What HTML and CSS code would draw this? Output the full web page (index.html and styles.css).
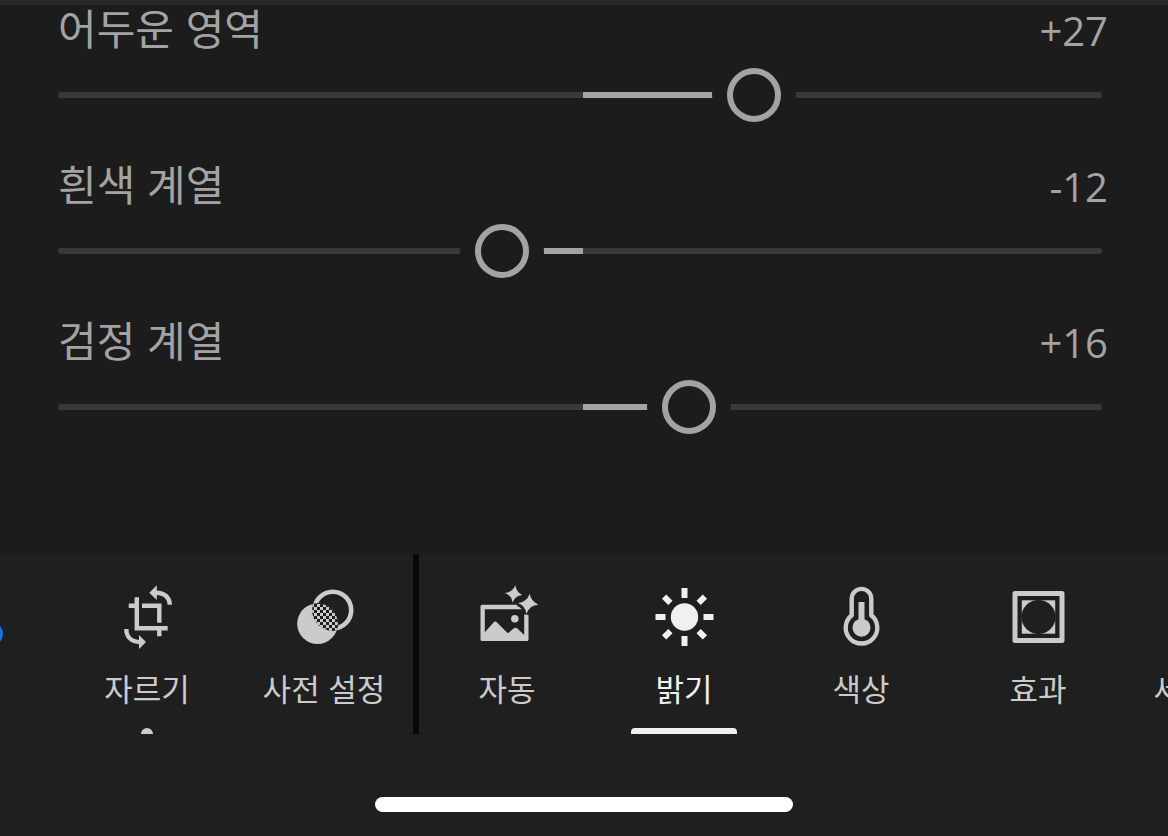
FILE: index.html
```html
<!DOCTYPE html>
<html lang="ko">
<head>
    <meta charset="UTF-8">
    <meta name="viewport" content="width=device-width, initial-scale=1.0">
    <title>밝기</title>
    <link rel="stylesheet" href="styles.css">
</head>
<body>
    <main class="panel">
        <div class="control">
            <div class="control-head">
                <label for="shadows">어두운 영역</label>
                <output for="shadows">+27</output>
            </div>
            <input type="range" id="shadows" min="0" max="1000" value="676" style="--pos: 0.676">
        </div>
        <div class="control">
            <div class="control-head">
                <label for="whites">흰색 계열</label>
                <output for="whites">-12</output>
            </div>
            <input type="range" id="whites" min="0" max="1000" value="421" style="--pos: 0.421">
        </div>
        <div class="control">
            <div class="control-head">
                <label for="blacks">검정 계열</label>
                <output for="blacks">+16</output>
            </div>
            <input type="range" id="blacks" min="0" max="1000" value="610" style="--pos: 0.61">
        </div>
    </main>

    <footer class="bottom">
        <nav class="toolbar">
            <span class="badge"></span>
            <button type="button" class="tool edited">
                <svg viewBox="0 0 68 68" fill="none" stroke="currentColor" stroke-width="4.4">
                    <path d="M23.8 14.3V45.2H54.7M15.7 22.8H23.8M29 22.8H46.3V39.8M46.3 45V53.3"/>
                    <path d="M43 9.7C51.5 9.7 56.7 14.5 56.7 21.7M13.3 46C13.3 53.5 18 59 27 59"/>
                    <path d="M36.3 9.7L43.8 2.3V17ZM33 59L26 52V66Z" fill="currentColor" stroke="none"/>
                </svg>
                <span>자르기</span>
            </button>
            <button type="button" class="tool">
                <svg viewBox="0 0 68 68">
                    <defs>
                        <pattern id="checker" width="6" height="6" patternUnits="userSpaceOnUse">
                            <path d="M0 0H3V3H0ZM3 3H6V6H3Z" fill="currentColor" shape-rendering="crispEdges"/>
                        </pattern>
                        <clipPath id="lens"><circle cx="42.8" cy="27.2" r="20.7"/></clipPath>
                    </defs>
                    <circle cx="42.8" cy="27.2" r="18.4" fill="none" stroke="currentColor" stroke-width="4.6"/>
                    <circle cx="27.5" cy="40.7" r="20.3" fill="currentColor"/>
                    <g clip-path="url(#lens)">
                        <circle cx="27.5" cy="40.7" r="20.6" fill="#1f1f1f"/>
                        <circle cx="27.5" cy="40.7" r="20.3" fill="url(#checker)"/>
                    </g>
                </svg>
                <span>사전 설정</span>
            </button>
            <div class="divider"></div>
            <button type="button" class="tool">
                <svg viewBox="0 0 68 68" fill="currentColor">
                    <path fill-rule="evenodd" d="M9 21.7H55.5V56.5Q55.5 58 54 58H9Q7.5 58 7.5 56.5V23.2Q7.5 21.7 9 21.7ZM11.8 26.3V49.3L20.5 39.6Q22.2 37.2 24 39.6L34.8 50.3L40.6 45.6Q42.5 44 44.4 45.6L51.2 52V26.3Z"/>
                    <circle cx="41.8" cy="35.7" r="3.8"/>
                    <path d="M56.8 10.8Q57.5 17.5 65.3 21.8Q56.5 22.2 53.4 31Q52.8 23 45 19.9Q53.5 19.5 56.8 10.8Z" stroke="#1f1f1f" stroke-width="6"/>
                    <path d="M42.3 2.3Q43.2 9 49.2 12Q42.2 12.5 39.5 19.5Q38.6 12.5 32 10Q39.5 9.2 42.3 2.3Z"/>
                    <path d="M56.8 10.8Q57.5 17.5 65.3 21.8Q56.5 22.2 53.4 31Q52.8 23 45 19.9Q53.5 19.5 56.8 10.8Z"/>
                </svg>
                <span>자동</span>
            </button>
            <button type="button" class="tool active">
                <svg viewBox="0 0 68 68" stroke="currentColor" stroke-width="6">
                    <circle cx="34.5" cy="34" r="13.7" fill="currentColor" stroke="none"/>
                    <path d="M34.5 5V15M34.5 53V63M5.5 34H15.5M53.5 34H63.5M14.1 13.6L20.4 19.9M48.6 48.1L54.9 54.4M54.9 13.6L48.6 19.9M20.4 48.1L14.1 54.4"/>
                </svg>
                <span>밝기</span>
            </button>
            <button type="button" class="tool">
                <svg viewBox="0 0 68 68" fill="none" stroke="currentColor">
                    <path d="M24.7 32.3V15.7A9.8 9.8 0 0 1 44.3 15.7V32.3A15.8 15.8 0 1 1 24.7 32.3Z" stroke-width="4.4"/>
                    <path d="M34.5 19V44" stroke-width="6"/>
                    <circle cx="34.5" cy="44.7" r="9" fill="currentColor" stroke="none"/>
                </svg>
                <span>색상</span>
            </button>
            <button type="button" class="tool">
                <svg viewBox="0 0 68 68">
                    <rect x="11" y="10.5" width="47" height="47" fill="none" stroke="currentColor" stroke-width="5" stroke-linejoin="round"/>
                    <rect x="17.8" y="17.3" width="33.4" height="33.4" fill="currentColor"/>
                    <circle cx="34.5" cy="34" r="17.1" fill="#1f1f1f"/>
                </svg>
                <span>효과</span>
            </button>
            <button type="button" class="tool">
                <svg viewBox="0 0 68 68" fill="none" stroke="currentColor" stroke-width="5">
                    <path d="M34 10L58 56H10Z"/>
                </svg>
                <span>세부 정보</span>
            </button>
        </nav>
        <div class="home-bar"></div>
    </footer>

    <script>
        document.querySelectorAll('input[type="range"]').forEach((slider) => {
            slider.addEventListener('input', () => {
                slider.style.setProperty('--pos', slider.value / 1000);
            });
        });
    </script>
</body>
</html>
```
FILE: styles.css
```css
* {
    box-sizing: border-box;
}
body {
    margin: 0;
    min-height: 100vh;
    display: flex;
    flex-direction: column;
    overflow: hidden;
    background-color: #1c1c1c;
    color: #a3a3a3;
    font-family: "Noto Sans CJK KR", sans-serif;
}
.panel {
    flex: 1;
    border-top: 5px solid #282828;
    padding: 0 60px 0 58px;
}
.control {
    height: 156px;
}
.control-head {
    display: flex;
    justify-content: space-between;
    height: 48px;
    line-height: 44px;
    font-size: 42px;
}
.control output {
    font-family: "Open Sans", sans-serif;
    font-size: 40px;
    line-height: 52px;
}
input[type="range"] {
    --mid: calc(50% + 3px);
    --thumb: calc(27px + (100% - 54px) * var(--pos));
    -webkit-appearance: none;
    appearance: none;
    display: block;
    width: calc(100% - 6px);
    height: 54px;
    margin: 15px 0 0;
    background: none;
}
input[type="range"]::-webkit-slider-runnable-track {
    height: 6px;
    border-radius: 3px;
    background: linear-gradient(to right,
        #393939 min(var(--mid), var(--thumb)),
        #a3a3a3 min(var(--mid), var(--thumb)),
        #a3a3a3 max(var(--mid), var(--thumb)),
        #393939 max(var(--mid), var(--thumb)));
}
/* the shadow leaves a gap in the track on both sides of the ring */
input[type="range"]::-webkit-slider-thumb {
    -webkit-appearance: none;
    width: 54px;
    height: 54px;
    margin-top: -24px;
    border: 6px solid #a3a3a3;
    border-radius: 50%;
    background-color: #1c1c1c;
    box-shadow: 0 0 0 15px #1c1c1c;
}
.bottom {
    background-color: #1f1f1f;
    padding-bottom: 24px;
}
.toolbar {
    position: relative;
    display: flex;
    height: 180px;
    padding-left: 59px;
    overflow: hidden;
}
.tool {
    position: relative;
    flex: 0 0 177px;
    display: flex;
    flex-direction: column;
    align-items: center;
    padding: 29px 1px 0 0;
    border: none;
    background: none;
    color: #cbcbcb;
    font-family: inherit;
    font-size: 31px;
    line-height: 40px;
    white-space: nowrap;
    cursor: pointer;
}
.tool svg {
    width: 68px;
    height: 68px;
    margin-bottom: 17px;
}
.tool.active {
    color: #f0f0f0;
}
.tool.active::after,
.tool.edited::after {
    content: "";
    position: absolute;
    bottom: 0;
    height: 6px;
    background-color: currentColor;
}
.tool.active::after {
    width: 106px;
    border-radius: 4px 4px 0 0;
}
.tool.edited::after {
    width: 12px;
    border-radius: 6px 6px 0 0;
}
.divider {
    flex: 0 0 6px;
    background-color: #080808;
}
.badge {
    position: absolute;
    left: -21px;
    top: 68px;
    width: 24px;
    height: 24px;
    border-radius: 50%;
    background-color: #1473e6;
}
.home-bar {
    width: 418px;
    height: 15px;
    margin: 63px auto 0;
    border-radius: 8px;
    background-color: #fff;
}
```
